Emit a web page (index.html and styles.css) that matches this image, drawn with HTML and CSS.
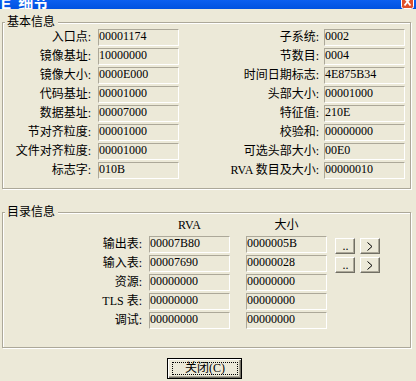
FILE: index.html
```html
<!DOCTYPE html>
<html lang="zh-CN">
<head>
<meta charset="utf-8">
<title>PE 细节</title>
<link rel="stylesheet" href="styles.css">
</head>
<body>
<div class="titlebar">
  <span class="title">E 细节</span>
  <svg class="close-x" width="13" height="9" viewBox="0 0 13 9" aria-label="关闭">
    <rect x="0.5" y="-8" width="12" height="16.5" rx="2" fill="#e0502a" stroke="#fff"/>
    <path d="M3.5 -2 L9.5 5.5 M9.5 -2 L3.5 5.5" stroke="#fff" stroke-width="1.8"/>
  </svg>
</div>
<div class="client">
  <fieldset class="group basic">
    <legend>基本信息</legend>
    <div class="grid">
      <span class="lbl l">入口点:</span><span class="val">00001174</span><span class="lbl r">子系统:</span><span class="val">0002</span>
      <span class="lbl l">镜像基址:</span><span class="val">10000000</span><span class="lbl r">节数目:</span><span class="val">0004</span>
      <span class="lbl l">镜像大小:</span><span class="val">0000E000</span><span class="lbl r">时间日期标志:</span><span class="val">4E875B34</span>
      <span class="lbl l">代码基址:</span><span class="val">00001000</span><span class="lbl r">头部大小:</span><span class="val">00001000</span>
      <span class="lbl l">数据基址:</span><span class="val">00007000</span><span class="lbl r">特征值:</span><span class="val">210E</span>
      <span class="lbl l">节对齐粒度:</span><span class="val">00001000</span><span class="lbl r">校验和:</span><span class="val">00000000</span>
      <span class="lbl l">文件对齐粒度:</span><span class="val">00001000</span><span class="lbl r">可选头部大小:</span><span class="val">00E0</span>
      <span class="lbl l">标志字:</span><span class="val">010B</span><span class="lbl r">RVA 数目及大小:</span><span class="val">00000010</span>
    </div>
  </fieldset>
  <fieldset class="group dir">
    <legend>目录信息</legend>
    <div class="grid">
      <span></span><span class="hdr">RVA</span><span class="hdr size">大小</span><span></span>
      <span class="lbl">输出表:</span><span class="val">00007B80</span><span class="val size">0000005B</span>
      <span class="btns"><button class="sbtn dots">..</button><button class="sbtn" aria-label="&gt;"><svg width="6" height="9" viewBox="0 0 6 9"><path d="M0.5 0.5 L5 4.5 L0.5 8.5" fill="none" stroke="#000"/></svg></button></span>
      <span class="lbl">输入表:</span><span class="val">00007690</span><span class="val size">00000028</span>
      <span class="btns"><button class="sbtn dots">..</button><button class="sbtn" aria-label="&gt;"><svg width="6" height="9" viewBox="0 0 6 9"><path d="M0.5 0.5 L5 4.5 L0.5 8.5" fill="none" stroke="#000"/></svg></button></span>
      <span class="lbl">资源:</span><span class="val">00000000</span><span class="val size">00000000</span><span></span>
      <span class="lbl">TLS 表:</span><span class="val">00000000</span><span class="val size">00000000</span><span></span>
      <span class="lbl">调试:</span><span class="val">00000000</span><span class="val size">00000000</span><span></span>
    </div>
  </fieldset>
  <div class="footer">
    <button class="closebtn"><span class="focus">关闭(C)</span></button>
  </div>
</div>
</body>
</html>
```

FILE: styles.css
```css
* { box-sizing: border-box; }
html, body { margin: 0; padding: 0; }
body {
  width: 416px;
  height: 381px;
  overflow: hidden;
  background: #ece9d8;
  color: #000;
  font: 12px "Liberation Serif", "Noto Sans CJK SC", serif;
}

.titlebar {
  height: 9px;
  overflow: hidden;
  display: flex;
  justify-content: space-between;
  background: linear-gradient(#0b5ff0, #0052e0);
}
.title {
  color: #fff;
  font: bold 15px/15px "Liberation Sans", "Noto Sans CJK SC", sans-serif;
  margin-top: -4px;
  padding-left: 1px;
  word-spacing: 3px;
  white-space: nowrap;
}
.close-x { display: block; margin-right: 2px; }

.client { padding-top: 6px; }

.group {
  margin: 0 0 0 2px;
  padding: 0;
  width: 409px;
  min-width: 0;
  border: 1px solid #aca899;
  box-shadow: inset 1px 1px 0 #fff, 1px 1px 0 #fff;
}
.group legend {
  margin-left: 2px;
  padding: 0 3px 2px 2px;
  font: 12px/12px "Noto Sans CJK SC", sans-serif;
  background: #ece9d8;
}

.lbl {
  text-align: right;
  line-height: 17px;
  white-space: nowrap;
}
.val {
  height: 17px;
  border: 1px solid;
  border-color: #aca899 #fff #fff #aca899;
  line-height: 13px;
  white-space: nowrap;
  overflow: hidden;
  font-family: "Liberation Serif", serif;
}

.basic .grid {
  display: grid;
  grid-template-columns: 95px 81px 145px 81px;
  grid-auto-rows: 17px;
  row-gap: 2px;
  padding: 0 5px 9px 0;
}
.basic .lbl.l { padding-right: 7px; }
.basic .lbl.r { padding-right: 5px; }

.dir { margin-top: 16px; }
.dir .grid {
  display: grid;
  grid-template-columns: 146px 81px 97px 1fr;
  grid-template-rows: 15px repeat(5, 17px);
  row-gap: 2px;
  padding-bottom: 18px;
}
.dir .lbl { padding-right: 7px; }
.dir .size { margin-left: 16px; }
.hdr {
  text-align: center;
  line-height: 12px;
}
.btns {
  display: flex;
  gap: 5px;
  padding: 2px 0 0 8px;
}
.sbtn {
  width: 20px;
  height: 16px;
  padding: 0;
  margin: 0;
  border: 1px solid;
  border-color: #fff #716f64 #716f64 #fff;
  box-shadow: inset -1px -1px 0 #aca899;
  background: #ece9d8;
  display: flex;
  align-items: center;
  justify-content: center;
  font: 12px/14px "Liberation Serif", serif;
  color: #000;
}
.sbtn.dots { align-items: flex-start; padding-left: 1px; }

.footer {
  width: 409px;
  margin-top: 10px;
  display: flex;
  justify-content: center;
}
.closebtn {
  width: 75px;
  height: 21px;
  margin: 0;
  padding: 3px 3px 3px 4px;
  border: 1px solid #000;
  background: #ece9d8;
  box-shadow: inset 1px 1px 0 #fff, inset -1px -1px 0 #716f64, inset -2px -2px 0 #aca899;
  font: 12px/11px "Liberation Serif", "Noto Sans CJK SC", serif;
  color: #000;
}
.focus {
  display: block;
  height: 100%;
  border: 1px dotted #000;
  text-align: center;
  white-space: nowrap;
}
```
